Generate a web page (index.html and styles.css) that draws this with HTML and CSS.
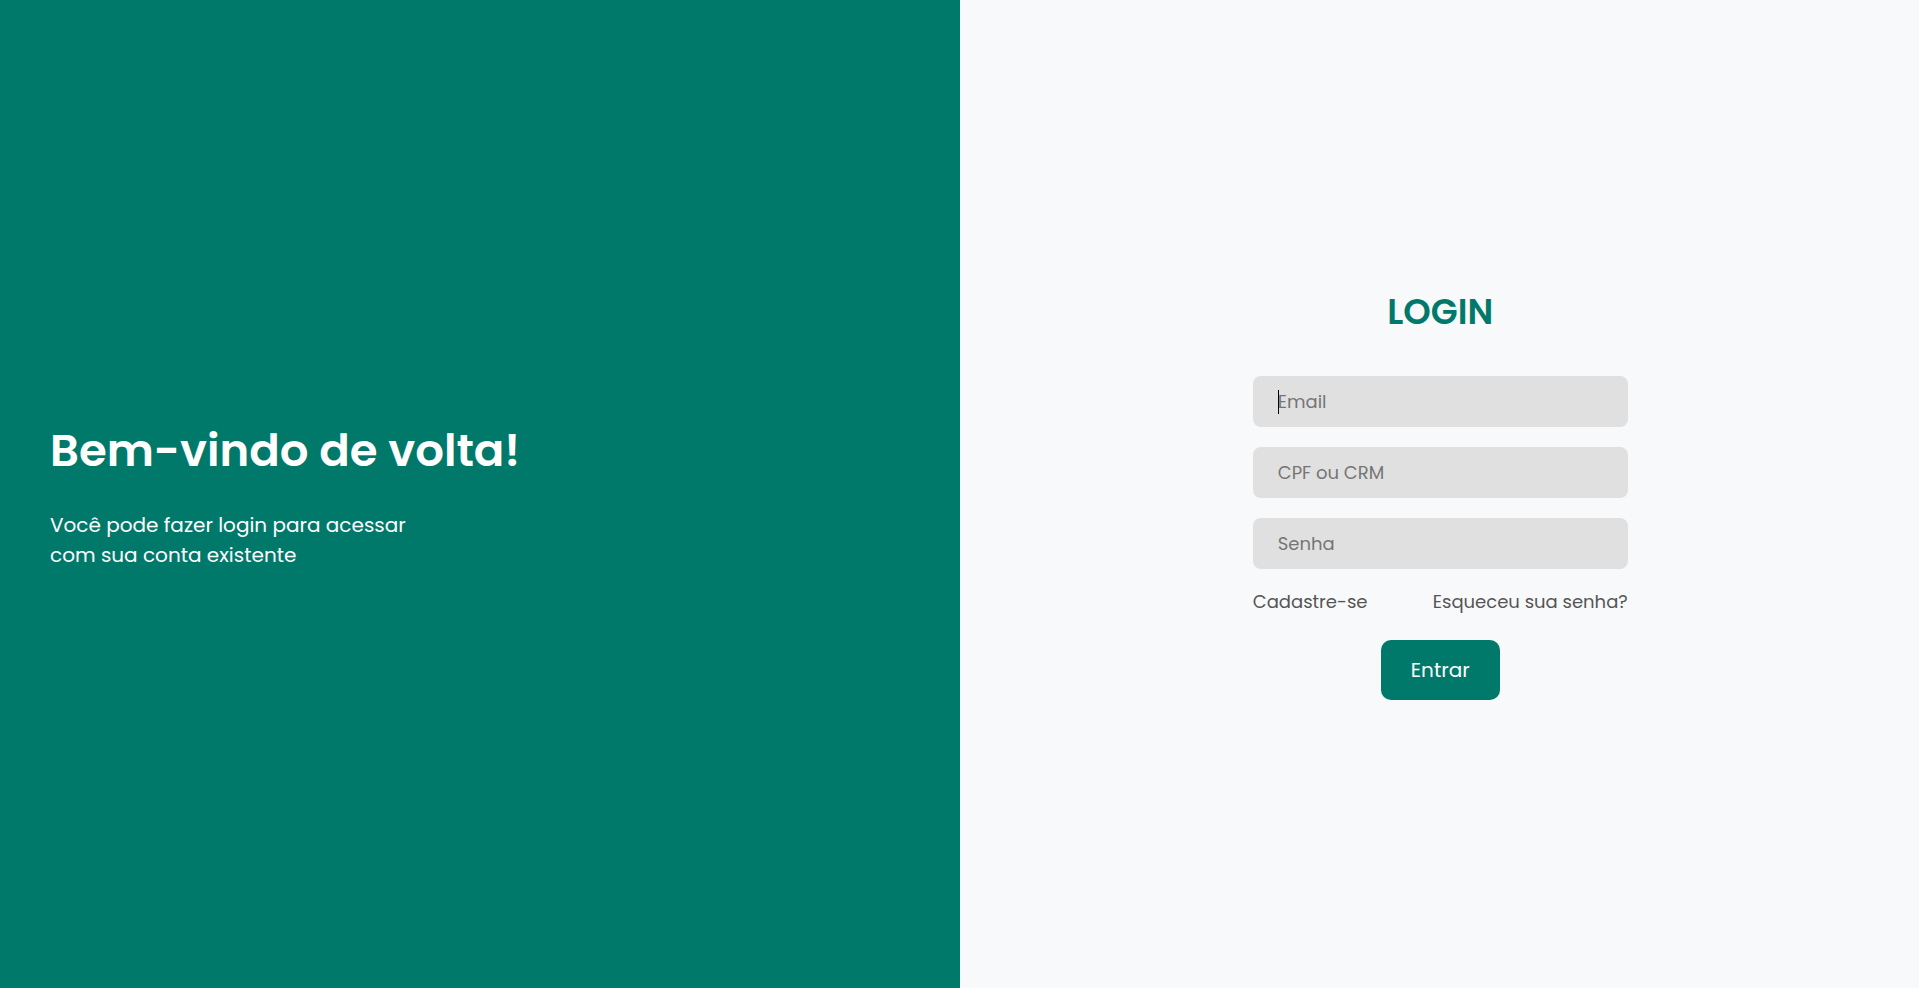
FILE: index.html
```html
<!DOCTYPE html>
<html lang="pt-BR">
<head>
<meta charset="utf-8">
<meta name="viewport" content="width=device-width, initial-scale=1">
<title>Login</title>
<link rel="stylesheet" href="styles.css">
</head>
<body>
<main class="page">
  <section class="welcome">
    <h1 class="welcome-title">Bem-vindo de volta!</h1>
    <p class="welcome-text">Você pode fazer login para acessar<br>com sua conta existente</p>
  </section>
  <section class="panel">
    <form class="login">
      <h2 class="login-title">LOGIN</h2>
      <input class="field field-active" type="email" placeholder="Email" aria-label="Email" autofocus>
      <input class="field" type="text" placeholder="CPF ou CRM" aria-label="CPF ou CRM">
      <input class="field" type="password" placeholder="Senha" aria-label="Senha">
      <nav class="links">
        <a class="link" href="#cadastro">Cadastre-se</a>
        <a class="link" href="#senha">Esqueceu sua senha?</a>
      </nav>
      <button class="submit" type="submit">Entrar</button>
    </form>
  </section>
</main>
</body>
</html>
```

FILE: styles.css
```css
* {
  box-sizing: border-box;
  margin: 0;
  padding: 0;
}

body, input, button {
  font-family: Poppins, Inter, "Open Sans", sans-serif;
}

.page {
  display: grid;
  grid-template-columns: 1fr 1fr;
  min-height: 100vh;
}

.welcome {
  display: flex;
  flex-direction: column;
  justify-content: center;
  gap: 25px;
  padding: 0 50px 2px;
  background: #00796b;
  color: #fff;
}

.welcome-title {
  font-size: 45px;
  font-weight: 600;
  line-height: 68px;
}

.welcome-text {
  font-size: 20px;
  line-height: 30px;
}

.panel {
  display: flex;
  align-items: center;
  justify-content: center;
  padding-left: 2px;
  background: #f8f9fa;
}

.login {
  display: flex;
  flex-direction: column;
  align-items: center;
  gap: 20px;
  width: 100%;
  max-width: 375px;
}

.login-title {
  margin-bottom: 20px;
  color: #00796b;
  font-size: 35px;
  font-weight: 600;
  line-height: 48px;
}

.field {
  width: 100%;
  height: 51px;
  padding: 0 25px;
  border: none;
  border-radius: 8px;
  outline: none;
  background: #e0e0e0;
  color: #333;
  font-size: 18px;
}

.field::placeholder {
  color: #757575;
}

/* Steady insertion mark while the field is empty */
.field-active:placeholder-shown {
  background: linear-gradient(#000, #000) 25px center / 1px 24px no-repeat #e0e0e0;
  caret-color: transparent;
}

.links {
  display: flex;
  justify-content: space-between;
  width: 100%;
  margin-bottom: 5px;
  line-height: 26px;
}

.link {
  color: #555;
  font-size: 18px;
  text-decoration: none;
}

.submit {
  height: 60px;
  padding: 0 30px;
  border: none;
  border-radius: 10px;
  background: #00796b;
  color: #fff;
  font-size: 20px;
  font-weight: 400;
}
```
